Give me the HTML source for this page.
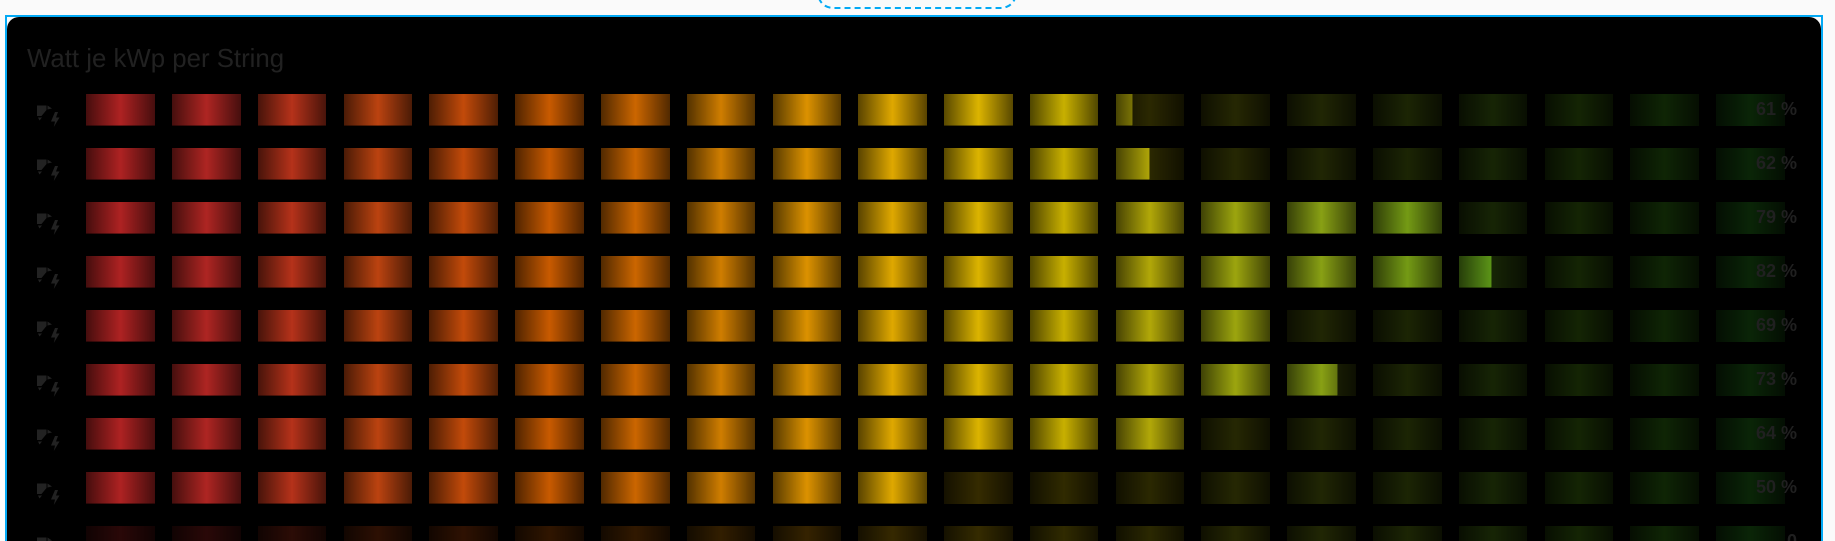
<!DOCTYPE html>
<html><head><meta charset="utf-8">
<style>
html,body{margin:0;padding:0;width:1835px;height:541px;overflow:hidden;background:#fafafa;font-family:"Liberation Sans",sans-serif}
#w{position:absolute;left:0;top:0;width:1835px;height:541px;overflow:hidden;background:#fafafa}
.dash{position:absolute;left:817px;top:-30px;width:196px;height:35px;border:2px dashed #03a9f4;border-radius:16px}
.frame{position:absolute;left:5px;top:15px;width:1818px;height:526px;background:#03a9f4}
.inner{position:absolute;left:7px;top:17px;width:1814px;height:524px;background:#fafafa}
.card{position:absolute;left:0;top:0;width:1814px;height:524px;background:#000;border-radius:12px 12px 0 0}
h1{position:absolute;left:27px;top:45px;margin:0;font-size:25.8px;line-height:28px;font-weight:400;color:#212121;white-space:nowrap}
.r{position:absolute;left:86.2px;width:1698.6px;height:32px;display:grid;grid-template-columns:repeat(20,1fr);column-gap:17.2px}
.r i{display:block;position:relative;height:32px;overflow:hidden}
.r i:before,.r b{position:absolute;left:0;top:0;height:32px;content:"";background:linear-gradient(90deg,rgba(0,0,0,.6),rgba(0,0,0,0) 50%,rgba(0,0,0,.6)),var(--c)}
.r i:before{width:100%;opacity:.24}
.r i.o:before{opacity:1}
.r b{display:block;width:100%;background-size:69px 32px;background-repeat:no-repeat;box-sizing:border-box}
.r i.o:after,.r b:after{content:"";position:absolute;left:0;bottom:0;width:100%;height:1px;background:rgba(0,0,0,.42)}
.r b:before{content:"";position:absolute;right:0;top:0;bottom:0;width:1px;background:rgba(0,0,0,.4)}
.r i:nth-child(1){--c:#ae2222}.r i:nth-child(2){--c:#ae2522}.r i:nth-child(3){--c:#b5321a}.r i:nth-child(4){--c:#bb4310}
.r i:nth-child(5){--c:#c24a0a}.r i:nth-child(6){--c:#c85a00}.r i:nth-child(7){--c:#cb6600}.r i:nth-child(8){--c:#cf7d00}
.r i:nth-child(9){--c:#dc9200}.r i:nth-child(10){--c:#dfa800}.r i:nth-child(11){--c:#dcb400}.r i:nth-child(12){--c:#c8b000}
.r i:nth-child(13){--c:#b2a808}.r i:nth-child(14){--c:#9ca50e}.r i:nth-child(15){--c:#88a014}.r i:nth-child(16){--c:#749a14}
.r i:nth-child(17){--c:#5f9a18}.r i:nth-child(18){--c:#559a14}.r i:nth-child(19){--c:#3f9a18}.r i:nth-child(20){--c:#2c9a20}
.p{position:absolute;right:38px;width:90px;text-align:right;font-size:18px;line-height:22px;font-weight:700;color:#202020;white-space:nowrap}
svg{position:absolute;left:0;top:0}
</style></head>
<body>
<div id="w">
<div class="dash"></div>
<div class="frame"></div>
<div class="inner"><div class="card"></div></div>
<h1>Watt je kWp per String</h1>

<div class="r" style="top:94px"><i class=o></i><i class=o></i><i class=o></i><i class=o></i><i class=o></i><i class=o></i><i class=o></i><i class=o></i><i class=o></i><i class=o></i><i class=o></i><i class=o></i><i><b style="width:17px"></b></i><i></i><i></i><i></i><i></i><i></i><i></i><i></i></div>
<div class="r" style="top:148px"><i class=o></i><i class=o></i><i class=o></i><i class=o></i><i class=o></i><i class=o></i><i class=o></i><i class=o></i><i class=o></i><i class=o></i><i class=o></i><i class=o></i><i><b style="width:34px"></b></i><i></i><i></i><i></i><i></i><i></i><i></i><i></i></div>
<div class="r" style="top:202px"><i class=o></i><i class=o></i><i class=o></i><i class=o></i><i class=o></i><i class=o></i><i class=o></i><i class=o></i><i class=o></i><i class=o></i><i class=o></i><i class=o></i><i class=o></i><i class=o></i><i class=o></i><i class=o></i><i></i><i></i><i></i><i></i></div>
<div class="r" style="top:256px"><i class=o></i><i class=o></i><i class=o></i><i class=o></i><i class=o></i><i class=o></i><i class=o></i><i class=o></i><i class=o></i><i class=o></i><i class=o></i><i class=o></i><i class=o></i><i class=o></i><i class=o></i><i class=o></i><i><b style="width:33px"></b></i><i></i><i></i><i></i></div>
<div class="r" style="top:310px"><i class=o></i><i class=o></i><i class=o></i><i class=o></i><i class=o></i><i class=o></i><i class=o></i><i class=o></i><i class=o></i><i class=o></i><i class=o></i><i class=o></i><i class=o></i><i class=o></i><i></i><i></i><i></i><i></i><i></i><i></i></div>
<div class="r" style="top:364px"><i class=o></i><i class=o></i><i class=o></i><i class=o></i><i class=o></i><i class=o></i><i class=o></i><i class=o></i><i class=o></i><i class=o></i><i class=o></i><i class=o></i><i class=o></i><i class=o></i><i><b style="width:51px"></b></i><i></i><i></i><i></i><i></i><i></i></div>
<div class="r" style="top:418px"><i class=o></i><i class=o></i><i class=o></i><i class=o></i><i class=o></i><i class=o></i><i class=o></i><i class=o></i><i class=o></i><i class=o></i><i class=o></i><i class=o></i><i class=o></i><i></i><i></i><i></i><i></i><i></i><i></i><i></i></div>
<div class="r" style="top:472px"><i class=o></i><i class=o></i><i class=o></i><i class=o></i><i class=o></i><i class=o></i><i class=o></i><i class=o></i><i class=o></i><i class=o></i><i></i><i></i><i></i><i></i><i></i><i></i><i></i><i></i><i></i><i></i></div>
<div class="r" style="top:526px"><i></i><i></i><i></i><i></i><i></i><i></i><i></i><i></i><i></i><i></i><i></i><i></i><i></i><i></i><i></i><i></i><i></i><i></i><i></i><i></i></div>

<div class="p" style="top:98px">61 %</div>
<div class="p" style="top:152px">62 %</div>
<div class="p" style="top:206px">79 %</div>
<div class="p" style="top:260px">82 %</div>
<div class="p" style="top:314px">69 %</div>
<div class="p" style="top:368px">73 %</div>
<div class="p" style="top:422px">64 %</div>
<div class="p" style="top:476px">50 %</div>
<div class="p" style="top:530px">0</div>

<svg width="1835" height="541" viewBox="0 0 1835 541">
<defs>
<g id="ic" fill="#222">
<path d="M37 105.500H46.500V110L41.500 116H37Z"/>
<path d="M47.500 105.500L52 108.500L47.500 109.500Z"/>
<path d="M38 117.500H42L39.500 120.500Z"/>
<path d="M55 112L51 121.500H55L53.800 127L59.500 117.500H56L58 112Z"/>
</g>
</defs>
<use href="#ic"/>
<use href="#ic" y="54"/>
<use href="#ic" y="108"/>
<use href="#ic" y="162"/>
<use href="#ic" y="216"/>
<use href="#ic" y="270"/>
<use href="#ic" y="324"/>
<use href="#ic" y="378"/>
<use href="#ic" y="432"/>
</svg>
</div>
</body></html>
